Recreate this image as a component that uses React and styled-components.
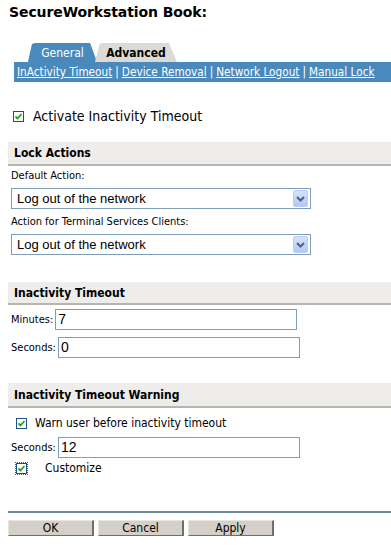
import styled, { createGlobalStyle } from "styled-components";

const GlobalStyle = createGlobalStyle`
  body {
    margin: 0;
    background: #fff;
    font-family: "DejaVu Sans Condensed", "DejaVu Sans", sans-serif;
    color: #000;
  }
`;

const Page = styled.div`
  width: 391px;
  height: 545px;
  overflow: hidden;
`;

const Title = styled.h1`
  margin: 3px 0 0 9px;
  font-family: "DejaVu Sans", sans-serif;
  font-size: 14px;
  font-weight: bold;
  line-height: 18px;
  letter-spacing: -0.1px;
`;

const Tabs = styled.div`
  display: flex;
  margin: 22px 0 0 28px;
  height: 19px;
  align-items: flex-end;
`;

const Tab = styled.div`
  height: 19px;
  box-sizing: border-box;
  padding: 2px 0 0;
  width: ${(p) => p.$width}px;
  text-align: center;
  font-size: 12px;
  line-height: 16px;
  font-weight: ${(p) => (p.$active ? "normal" : "bold")};
  color: ${(p) => (p.$active ? "#fff" : "#000")};
  background: ${(p) => (p.$active ? "#4a89bc" : "#dcdad4")};
  border-radius: 8px 6px 0 0;
  clip-path: polygon(0 100%, 6% 0, 90% 0, 100% 100%);
  margin-right: -2px;
`;

const NavBar = styled.nav`
  margin-left: 14px;
  height: 20px;
  background: #4a89bc;
  display: flex;
  align-items: center;
  padding-left: 3px;
  font-size: 11.7px;
  color: #fff;
  white-space: nowrap;
`;

const NavLink = styled.a`
  color: #fff;
  text-decoration: underline;
  cursor: pointer;
  flex-shrink: 0;
`;

const Sep = styled.span`
  margin: 0 3px;
`;

const CheckRow = styled.label`
  display: flex;
  align-items: center;
  height: ${(p) => p.$h || 16}px;
  margin: ${(p) => p.$mt}px 0 0 ${(p) => p.$ml}px;
  font-size: ${(p) => p.$fs || 12}px;
  gap: ${(p) => p.$gap || 8}px;
`;

const Box = styled.span`
  width: 11px;
  height: 11px;
  box-sizing: border-box;
  border: 1px solid #1c5180;
  background: #fff;
  display: flex;
  align-items: center;
  justify-content: center;
  outline: ${(p) => (p.$focus ? "1px dotted #555" : "none")};
  outline-offset: 0;
`;

const SectionHead = styled.div`
  margin: ${(p) => p.$mt}px 0 0 8px;
  height: ${(p) => p.$h}px;
  background: #eeedeb;
  border-bottom: 2px solid #b6b6ae;
  display: flex;
  align-items: center;
  padding-left: 6px;
  font-size: 12px;
  font-weight: bold;
`;

const FieldLabel = styled.div`
  margin: ${(p) => p.$mt}px 0 0 11px;
  font-size: 11px;
  line-height: 16px;
`;

const Select = styled.div`
  margin: ${(p) => p.$mt}px 0 0 11px;
  width: 300px;
  height: 21px;
  box-sizing: border-box;
  border: 1px solid #7f9db9;
  display: flex;
  align-items: center;
  justify-content: space-between;
  padding: 0 2px 0 5px;
  font-family: "Liberation Sans", Arial, sans-serif;
  font-size: 13px;
`;

const DropBtn = styled.span`
  width: 15px;
  height: 17px;
  box-sizing: border-box;
  border: 1px solid #b9cdf5;
  border-radius: 2px;
  background: linear-gradient(#d6e2fc, #b4c8f4);
  display: flex;
  align-items: center;
  justify-content: center;
`;

const InputRow = styled.div`
  display: flex;
  align-items: center;
  margin: ${(p) => p.$mt}px 0 0 11px;
  gap: 2px;
  font-size: 11px;
`;

const TextBox = styled.div`
  width: ${(p) => p.$w}px;
  height: 21px;
  box-sizing: border-box;
  border: 1px solid #7f9db9;
  padding-left: 2px;
  font-family: "Liberation Sans", Arial, sans-serif;
  font-size: 14px;
  line-height: 19px;
`;

const Rule = styled.div`
  margin: 35px 0 0 8px;
  height: 2px;
  background: #6d8a99;
`;

const Buttons = styled.div`
  display: flex;
  gap: 4px;
  margin: 7px 0 0 8px;
`;

const Button = styled.button`
  width: 86px;
  height: 16px;
  padding: 0;
  background: #d4d0c8;
  border: none;
  border-right: 2px solid #6e6e6e;
  border-bottom: 1px solid #6e6e6e;
  border-top: 1px solid #e8e6e2;
  border-left: 1px solid #e8e6e2;
  font-family: "DejaVu Sans Condensed", "DejaVu Sans", sans-serif;
  font-size: 12px;
  line-height: 13px;
  color: #000;
`;

function Check({ focus }) {
  return (
    <Box $focus={focus}>
      <svg width="9" height="9" viewBox="0 0 9 9">
        <path d="M1.5 4.5 L3.5 6.5 L7.5 2" stroke="#21a121" strokeWidth="1.8" fill="none" />
      </svg>
    </Box>
  );
}

function Chevron() {
  return (
    <svg width="9" height="6" viewBox="0 0 9 6">
      <path d="M1 1 L4.5 4.5 L8 1" stroke="#4d6185" strokeWidth="2" fill="none" />
    </svg>
  );
}

export default function App() {
  return (
    <Page>
      <GlobalStyle />
      <Title>SecureWorkstation Book:</Title>
      <Tabs>
        <Tab $active $width={69}>General</Tab>
        <Tab $width={82}>Advanced</Tab>
      </Tabs>
      <NavBar>
        <NavLink>InActivity Timeout</NavLink>
        <Sep>|</Sep>
        <NavLink>Device Removal </NavLink>
        <Sep>|</Sep>
        <NavLink>Network Logout</NavLink>
        <Sep>|</Sep>
        <NavLink>Manual Lock</NavLink>
      </NavBar>

      <CheckRow $mt={24} $ml={13} $fs={14} $h={20} $gap={9}>
        <Check />
        Activate Inactivity Timeout
      </CheckRow>

      <SectionHead $mt={16} $h={22}>Lock Actions</SectionHead>
      <FieldLabel $mt={2}>Default Action:</FieldLabel>
      <Select $mt={4}>
        Log out of the network
        <DropBtn><Chevron /></DropBtn>
      </Select>
      <FieldLabel $mt={5}>Action for Terminal Services Clients:</FieldLabel>
      <Select $mt={4}>
        Log out of the network
        <DropBtn><Chevron /></DropBtn>
      </Select>

      <SectionHead $mt={27} $h={21}>Inactivity Timeout</SectionHead>
      <InputRow $mt={4}>
        Minutes:<TextBox $w={242}>7</TextBox>
      </InputRow>
      <InputRow $mt={7}>
        Seconds:<TextBox $w={242}>0</TextBox>
      </InputRow>

      <SectionHead $mt={25} $h={23}>Inactivity Timeout Warning</SectionHead>
      <CheckRow $mt={7} $ml={16}>
        <Check />
        Warn user before inactivity timeout
      </CheckRow>
      <InputRow $mt={6}>
        Seconds:<TextBox $w={242}>12</TextBox>
      </InputRow>
      <CheckRow $mt={2} $ml={16} $gap={18}>
        <Check focus />
        Customize
      </CheckRow>

      <Rule />
      <Buttons>
        <Button>OK</Button>
        <Button>Cancel</Button>
        <Button>Apply</Button>
      </Buttons>
    </Page>
  );
}
